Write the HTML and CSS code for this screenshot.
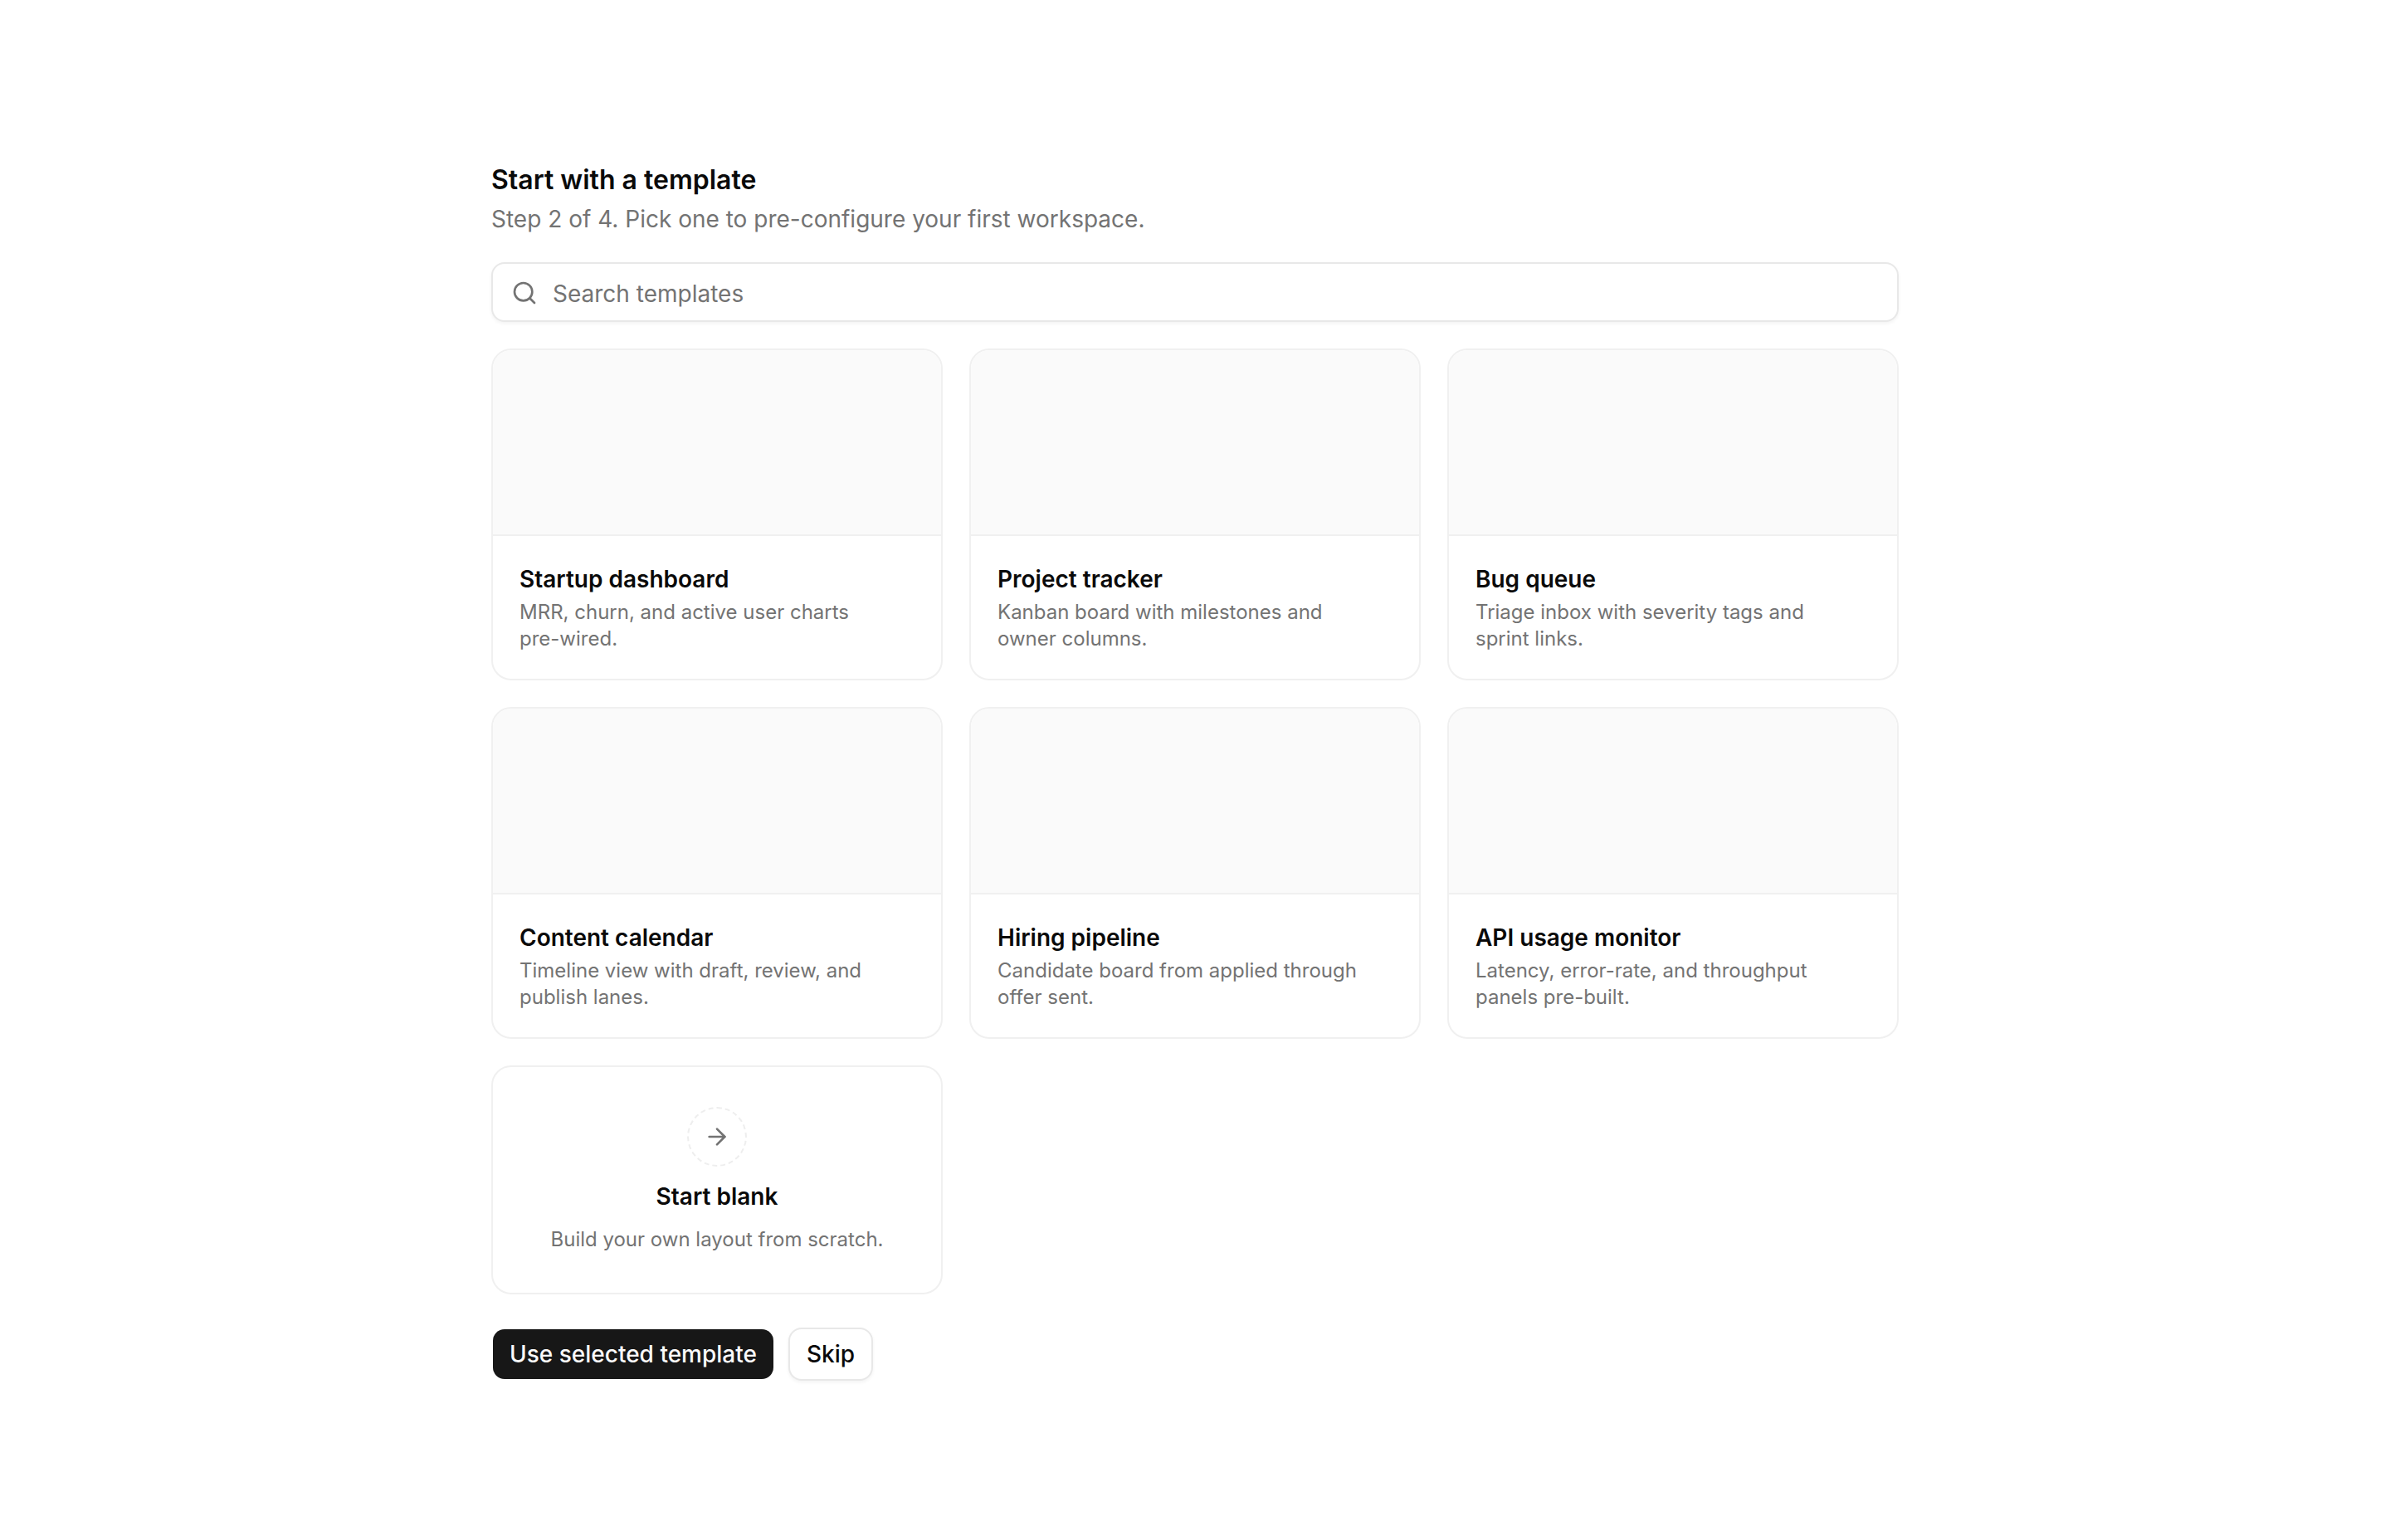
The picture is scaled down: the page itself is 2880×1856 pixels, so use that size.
FILE: index.html
```html
<!DOCTYPE html>
<html lang="en">
<head>
<meta charset="utf-8">
<title>Start with a template</title>
<link rel="stylesheet" href="styles.css">
</head>
<body>
<main class="page">
  <header class="head">
    <h1 class="head-title">Start with a template</h1>
    <p class="head-sub">Step 2 of 4. Pick one to pre-configure your first workspace.</p>
  </header>
  <label class="search">
    <svg class="search-icon" viewBox="0 0 24 24" fill="none" stroke="currentColor" stroke-width="2" stroke-linecap="round" stroke-linejoin="round"><path d="m21 21-4.34-4.34"/><circle cx="11" cy="11" r="8"/></svg>
    <input class="search-input" type="text" placeholder="Search templates">
  </label>
  <section class="grid">
    <article class="card">
      <div class="card-preview"></div>
      <div class="card-body">
        <h2 class="card-title">Startup dashboard</h2>
        <p class="card-desc">MRR, churn, and active user charts pre-wired.</p>
      </div>
    </article>
    <article class="card">
      <div class="card-preview"></div>
      <div class="card-body">
        <h2 class="card-title">Project tracker</h2>
        <p class="card-desc">Kanban board with milestones and owner columns.</p>
      </div>
    </article>
    <article class="card">
      <div class="card-preview"></div>
      <div class="card-body">
        <h2 class="card-title">Bug queue</h2>
        <p class="card-desc">Triage inbox with severity tags and sprint links.</p>
      </div>
    </article>
    <article class="card">
      <div class="card-preview"></div>
      <div class="card-body">
        <h2 class="card-title">Content calendar</h2>
        <p class="card-desc">Timeline view with draft, review, and publish lanes.</p>
      </div>
    </article>
    <article class="card">
      <div class="card-preview"></div>
      <div class="card-body">
        <h2 class="card-title">Hiring pipeline</h2>
        <p class="card-desc">Candidate board from applied through offer sent.</p>
      </div>
    </article>
    <article class="card">
      <div class="card-preview"></div>
      <div class="card-body">
        <h2 class="card-title">API usage monitor</h2>
        <p class="card-desc">Latency, error-rate, and throughput panels pre-built.</p>
      </div>
    </article>
    <article class="card card-blank">
      <div class="blank-ring">
        <svg class="blank-icon" viewBox="0 0 24 24" fill="none" stroke="currentColor" stroke-width="2" stroke-linecap="round" stroke-linejoin="round"><path d="M5 12h14"/><path d="m12 5 7 7-7 7"/></svg>
      </div>
      <h2 class="card-title blank-title">Start blank</h2>
      <p class="card-desc">Build your own layout from scratch.</p>
    </article>
  </section>
  <div class="actions">
    <button class="btn btn-primary" type="button">Use selected template</button>
    <button class="btn btn-secondary" type="button">Skip</button>
  </div>
</main>
</body>
</html>
```
FILE: styles.css
```css
* { box-sizing: border-box; }
html, body { margin: 0; padding: 0; background: #fff; }
body {
  font-family: Inter, "Noto Sans", sans-serif;
  color: #0a0a0a;
}
.page {
  width: 1696px;
  margin: 0 auto;
  padding: 192px 0;
  display: flex;
  flex-direction: column;
}
.head { display: flex; flex-direction: column; gap: 2px; margin-bottom: 32px; }
.head-title { margin: 0; font-size: 32px; line-height: 50px; font-weight: 600; }
.head-sub { margin: 0; font-size: 28px; line-height: 40px; color: #737373; }
.search {
  display: flex;
  align-items: center;
  gap: 18px;
  height: 72px;
  padding: 0 20px;
  border: 2px solid #e8e8e8;
  border-radius: 16px;
  background: #fff;
  box-shadow: 0 2px 4px rgba(0, 0, 0, 0.05);
  margin-bottom: 32px;
}
.search-icon { width: 32px; height: 32px; margin: 2px 0 0 2px; color: #737373; flex: none; }
.search-input {
  flex: 1;
  border: 0;
  outline: 0;
  padding: 4px 0 0;
  background: transparent;
  font: inherit;
  font-size: 28px;
  line-height: 40px;
  color: #0a0a0a;
}
.search-input::placeholder { color: #737373; opacity: 1; }
.grid { display: grid; grid-template-columns: repeat(3, 1fr); gap: 32px; }
.card {
  height: 400px;
  border: 2px solid #f0f0f0;
  border-radius: 24px;
  overflow: hidden;
  background: #fff;
  display: flex;
  flex-direction: column;
}
.card-preview { height: 224px; background: #fafafa; border-bottom: 2px solid #f0f0f0; }
.card-body { padding: 32px; }
.card-title { margin: 0 0 4px; font-size: 28px; line-height: 40px; font-weight: 600; }
.card-desc { margin: 0; max-width: 440px; font-size: 24px; line-height: 32px; color: #737373; }
.card-blank { height: auto; align-items: center; padding: 48px 32px; text-align: center; }
.blank-ring {
  width: 72px;
  height: 72px;
  border: 2px dashed #eeeeee;
  border-radius: 50%;
  display: flex;
  align-items: center;
  justify-content: center;
  margin-bottom: 16px;
}
.blank-icon { width: 32px; height: 32px; color: #737373; }
.blank-title { margin-bottom: 16px; }
.actions { display: flex; gap: 16px; margin-top: 40px; }
.btn {
  height: 64px;
  padding: 0 20px;
  border-radius: 16px;
  border: 2px solid transparent;
  font: inherit;
  font-size: 28px;
  font-weight: 500;
  line-height: 40px;
}
.btn-primary { background: #171717; background-clip: padding-box; color: #fafafa; }
.btn-secondary { background: #fff; border-color: #e8e8e8; color: #0a0a0a; box-shadow: 0 2px 4px rgba(0, 0, 0, 0.05); }
```
